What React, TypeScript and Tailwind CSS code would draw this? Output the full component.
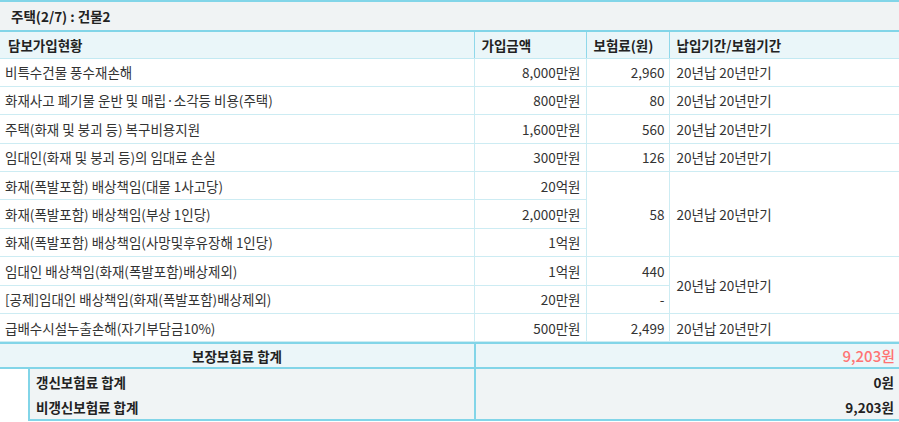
import React from "react";

const font = { fontFamily: '"Noto Sans CJK KR", "Noto Sans", sans-serif' };

type Row = {
  name: string;
  amount: string;
  premium?: string;
  premiumSpan?: number;
  period?: string;
  periodSpan?: number;
};

const rows: Row[] = [
  { name: "비특수건물 풍수재손해", amount: "8,000만원", premium: "2,960", period: "20년납 20년만기" },
  { name: "화재사고 폐기물 운반 및 매립·소각등 비용(주택)", amount: "800만원", premium: "80", period: "20년납 20년만기" },
  { name: "주택(화재 및 붕괴 등) 복구비용지원", amount: "1,600만원", premium: "560", period: "20년납 20년만기" },
  { name: "임대인(화재 및 붕괴 등)의 임대료 손실", amount: "300만원", premium: "126", period: "20년납 20년만기" },
  { name: "화재(폭발포함) 배상책임(대물 1사고당)", amount: "20억원", premium: "58", premiumSpan: 3, period: "20년납 20년만기", periodSpan: 3 },
  { name: "화재(폭발포함) 배상책임(부상 1인당)", amount: "2,000만원" },
  { name: "화재(폭발포함) 배상책임(사망및후유장해 1인당)", amount: "1억원" },
  { name: "임대인 배상책임(화재(폭발포함)배상제외)", amount: "1억원", premium: "440", period: "20년납 20년만기", periodSpan: 2 },
  { name: "[공제]임대인 배상책임(화재(폭발포함)배상제외)", amount: "20만원", premium: "-" },
  { name: "급배수시설누출손해(자기부담금10%)", amount: "500만원", premium: "2,499", period: "20년납 20년만기" },
];

export default function App() {
  return (
    <div className="w-[899px] h-[422px] overflow-hidden bg-white text-[13.5px] text-[#333]" style={font}>
      <table className="w-[899px] table-fixed border-collapse">
        <colgroup>
          <col className="w-[474px]" />
          <col className="w-[112px]" />
          <col className="w-[83px]" />
          <col className="w-[230px]" />
        </colgroup>
        <thead>
          <tr className="h-[30px]">
            <td
              colSpan={4}
              className="bg-[#f0f3f4] border-t-2 border-b-2 border-[#82d5e8] pl-[11px] font-bold text-[#222] align-middle"
            >
              주택(2/7) : 건물2
            </td>
          </tr>
          <tr className="h-[27px] bg-[#eaf6f9] font-bold text-[#222]">
            <td className="pl-[8px] border-b border-[#c3e9f2]">담보가입현황</td>
            <td className="pl-[7px] border-b border-l border-[#c3e9f2] border-l-[#8fd8ea]">가입금액</td>
            <td className="pl-[7px] border-b border-l border-[#c3e9f2] border-l-[#8fd8ea]">보험료(원)</td>
            <td className="pl-[7px] border-b border-l border-[#c3e9f2] border-l-[#8fd8ea]">납입기간/보험기간</td>
          </tr>
        </thead>
        <tbody>
          {rows.map((r, i) => (
            <tr key={i} className="h-[28.4px]">
              <td className="pl-[5px] border-b border-[#cdecf3] whitespace-nowrap">{r.name}</td>
              <td className="pr-[5px] text-right border-b border-l border-[#cdecf3]">{r.amount}</td>
              {r.premium !== undefined && (
                <td rowSpan={r.premiumSpan} className="pr-[4px] text-right border-b border-l border-[#cdecf3]">
                  {r.premium}
                </td>
              )}
              {r.period !== undefined && (
                <td rowSpan={r.periodSpan} className="pl-[7px] border-b border-l border-[#cdecf3]">
                  {r.period}
                </td>
              )}
            </tr>
          ))}
        </tbody>
      </table>
      <div className="flex flex-col border-t-2 border-[#82d5e8] font-bold text-[#222]">
        <div className="flex h-[25px] bg-[#ebf6f9] border-b-2 border-[#82d5e8]">
          <div className="w-[474px] flex items-center justify-center">보장보험료 합계</div>
          <div className="flex-1 flex items-center justify-end pr-[4px] border-l-2 border-[#82d5e8] text-[#ff7373] text-[15px] font-medium">
            9,203원
          </div>
        </div>
        <div className="flex h-[52px]">
          <div className="w-[28px] bg-white" />
          <div className="flex-1 flex border-l-2 border-b-2 border-[#82d5e8] bg-[#f0f4f5]">
            <div className="w-[444px] flex flex-col">
              <div className="h-[25px] flex items-center pl-[6px]">갱신보험료 합계</div>
              <div className="h-[25px] flex items-center pl-[6px]">비갱신보험료 합계</div>
            </div>
            <div className="flex-1 flex flex-col border-l-2 border-[#82d5e8]">
              <div className="h-[25px] flex items-center justify-end pr-[5px]">0원</div>
              <div className="h-[25px] flex items-center justify-end pr-[5px]">9,203원</div>
            </div>
          </div>
        </div>
      </div>
    </div>
  );
}
